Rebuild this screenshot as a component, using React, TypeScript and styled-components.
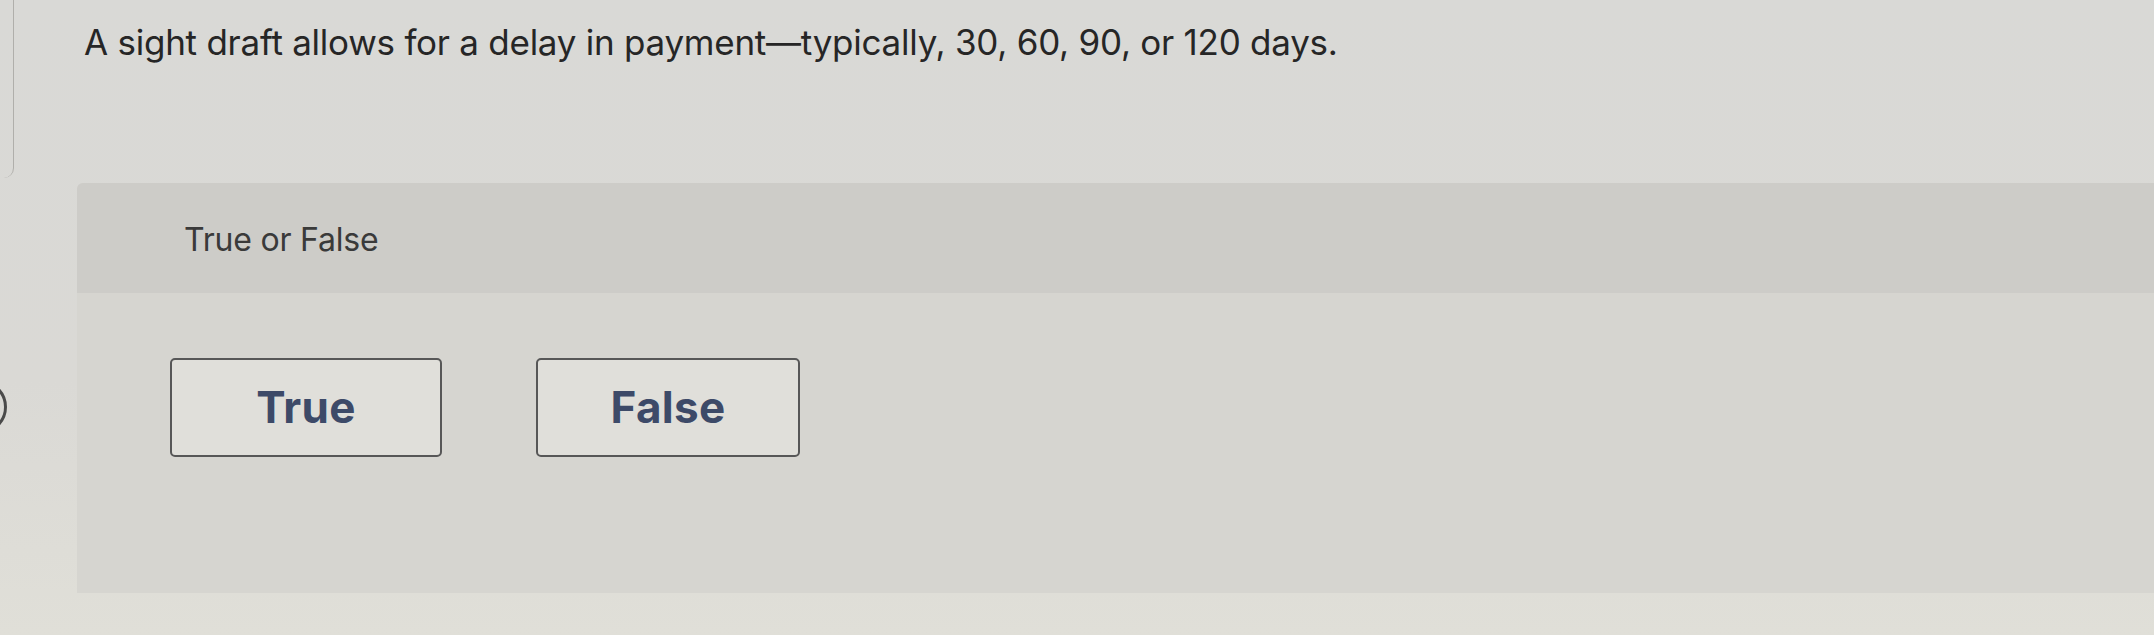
import React from "react";
import styled, { createGlobalStyle } from "styled-components";

const Global = createGlobalStyle`
  html, body {
    margin: 0;
    padding: 0;
    width: 2154px;
    height: 635px;
    overflow: hidden;
    background: #d8d7d3;
    font-family: "Inter", "Noto Sans", sans-serif;
  }
  #root { height: 635px; }
`;

const Page = styled.div`
  display: flex;
  height: 635px;
  background: linear-gradient(180deg, #d9d9d6 0%, #dad9d5 60%, #e0dfd8 100%);
`;

const Rail = styled.div`
  width: 14px;
  display: flex;
  flex-direction: column;
  flex-shrink: 0;
`;

const RailPanel = styled.div`
  height: 178px;
  border-right: 1.5px solid #b0afab;
  border-bottom-right-radius: 10px;
`;

const RailButton = styled.div`
  margin-top: 202px;
  margin-left: -47px;
  width: 48px;
  height: 48px;
  border-radius: 50%;
  border: 3px solid #4a4a4a;
  flex-shrink: 0;
`;

const Main = styled.div`
  flex: 1;
  display: flex;
  flex-direction: column;
  padding-left: 63px;
`;

const Question = styled.h1`
  margin: 22px 0 0 7px;
  font-size: 35px;
  font-weight: 400;
  line-height: 40px;
  color: #262626;
  letter-spacing: -0.25px;
  height: 161px;
`;

const Panel = styled.section`
  display: flex;
  flex-direction: column;
  height: 410px;
  border-top-left-radius: 6px;
  overflow: hidden;
  background: #d6d5d0;
`;

const PromptBar = styled.div`
  height: 110px;
  background: #cdccc8;
  display: flex;
  align-items: flex-start;
  padding: 37px 0 0 107px;
  box-sizing: border-box;
  font-size: 32px;
  letter-spacing: -0.2px;
  color: #3a3a3a;
`;

const Choices = styled.div`
  display: flex;
  gap: 94px;
  padding: 65px 0 0 93px;
`;

const Choice = styled.button<{ $w: number }>`
  width: ${(p) => p.$w}px;
  height: 99px;
  box-sizing: border-box;
  border: 2px solid #575757;
  border-radius: 5px;
  background: #e0dfda;
  font-family: "Inter", "Noto Sans", sans-serif;
  font-weight: 700;
  font-size: 44px;
  letter-spacing: 0.3px;
  color: #3d4a68;
  display: flex;
  align-items: center;
  justify-content: center;
  padding: 0 0 2px;
  cursor: pointer;
`;

export default function App() {
  return (
    <>
      <Global />
      <Page>
        <Rail>
          <RailPanel />
          <RailButton />
        </Rail>
        <Main>
          <Question>
            A sight draft allows for a delay in payment—typically, 30, 60, 90, or 120 days.
          </Question>
          <Panel>
            <PromptBar>True or False</PromptBar>
            <Choices>
              <Choice $w={272}>True</Choice>
              <Choice $w={264}>False</Choice>
            </Choices>
          </Panel>
        </Main>
      </Page>
    </>
  );
}
